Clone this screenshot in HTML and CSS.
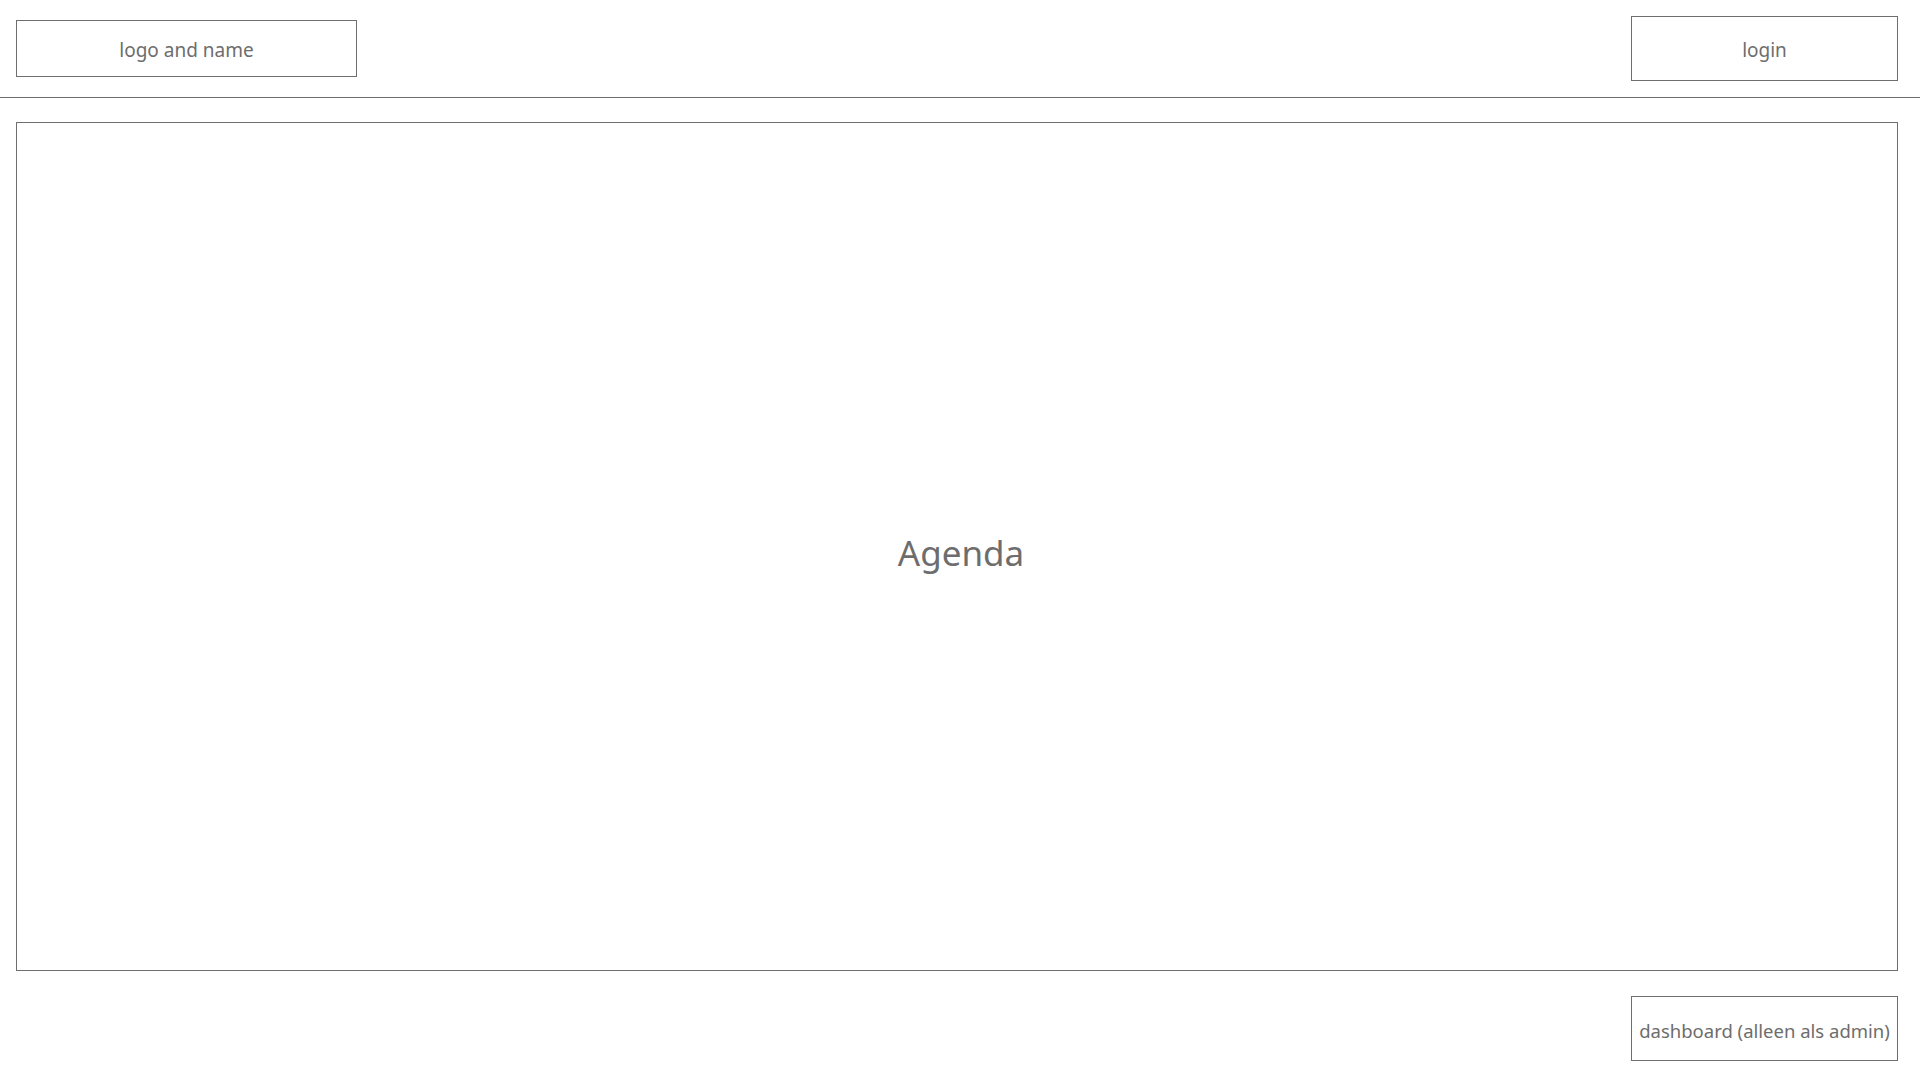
FILE: index.html
```html
<!DOCTYPE html>
<html>
<head>
<meta charset="utf-8">
<link rel="stylesheet" href="styles.css">
</head>
<body>
<header class="topbar">
  <div class="box logo">logo and name</div>
  <div class="box login">login</div>
</header>
<main class="agenda">Agenda</main>
<footer class="bottombar">
  <div class="box dashboard">dashboard (alleen als admin)</div>
</footer>
</body>
</html>
```
FILE: styles.css
```css
html, body {
  margin: 0;
  padding: 0;
  background: #ffffff;
}
body {
  font-family: "Noto Sans", "Open Sans", sans-serif;
  color: #6d6d6d;
  width: 1920px;
  height: 1080px;
  overflow: hidden;
}
.box {
  box-sizing: border-box;
  border: 1px solid #6e6e6e;
  display: flex;
  align-items: center;
  justify-content: center;
  padding-top: 3px;
}
.topbar {
  box-sizing: border-box;
  height: 98px;
  border-bottom: 1px solid #6e6e6e;
  display: flex;
  align-items: center;
  justify-content: space-between;
  padding: 0 22px 0 16px;
}
.logo {
  width: 341px;
  height: 57px;
  font-size: 19px;
}
.login {
  width: 267px;
  height: 65px;
  font-size: 19px;
}
.agenda {
  box-sizing: border-box;
  margin: 24px 22px 0 16px;
  height: 849px;
  border: 1px solid #6e6e6e;
  display: flex;
  align-items: center;
  justify-content: center;
  padding: 12px 0 0 8px;
  font-size: 35px;
}
.bottombar {
  display: flex;
  justify-content: flex-end;
  padding: 0 22px 0 16px;
  margin-top: 25px;
}
.dashboard {
  width: 267px;
  height: 65px;
  font-size: 18.5px;
  white-space: nowrap;
}
```
